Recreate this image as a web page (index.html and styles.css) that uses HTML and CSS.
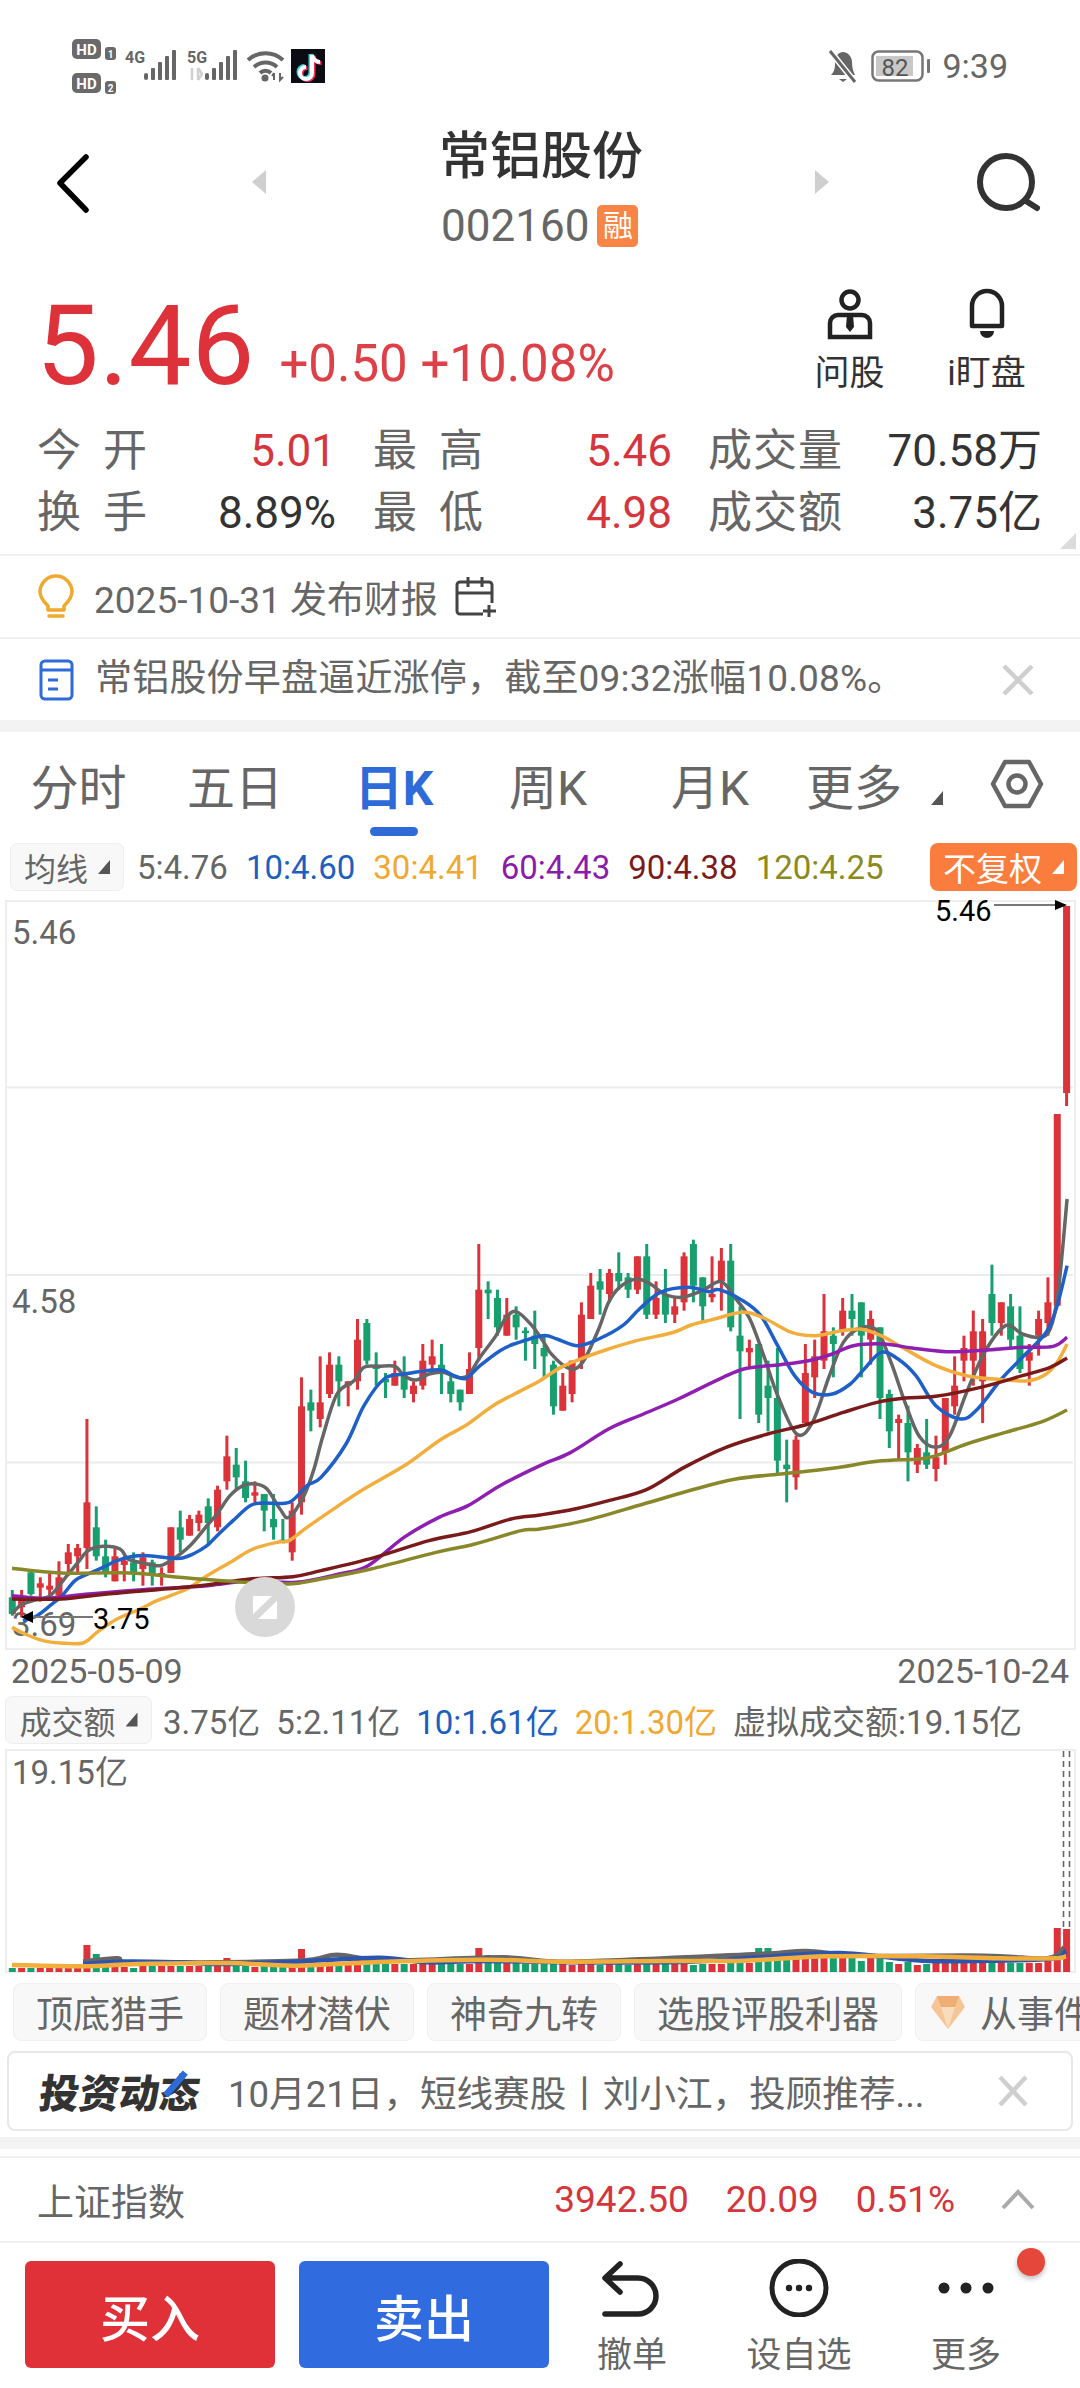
FILE: index.html
```html
<!DOCTYPE html>
<html lang="zh-CN">
<head>
  <meta charset="UTF-8" />
  <title>常铝股份</title>
  <link rel="stylesheet" href="styles.css">
</head>
<body>
  <div class="page">

    <div class="statusBar">
      <svg class="statusLeft" width="260" height="60" viewBox="70 36 260 60">
        <rect x="72" y="39" width="29" height="20" rx="5" fill="#6a6a6a"/>
        <text class="sbHd" x="86.5" y="55">HD</text>
        <rect x="105" y="47" width="11" height="13" rx="3" fill="#6a6a6a"/>
        <text class="sbNum" x="110.5" y="57.5">1</text>
        <rect x="72" y="73" width="29" height="20" rx="5" fill="#6a6a6a"/>
        <text class="sbHd" x="86.5" y="89">HD</text>
        <rect x="105" y="81" width="11" height="13" rx="3" fill="#6a6a6a"/>
        <text class="sbNum" x="110.5" y="91.5">2</text>
        <text class="sbNet" x="135" y="63">4G</text>
        <g fill="#666">
          <rect x="144" y="73" width="4" height="7" rx="2"/>
          <rect x="151" y="68" width="4" height="12" rx="1"/>
          <rect x="158" y="62" width="4" height="18" rx="1"/>
          <rect x="165" y="56" width="4" height="24" rx="1"/>
          <rect x="172" y="50" width="4" height="30" rx="1"/>
        </g>
        <text class="sbNet" x="197" y="63">5G</text>
        <path d="M192 68 v12 M198 68 v12 M198 68 l4 6 l-4 6" stroke="#d0d0d0" stroke-width="2.5" fill="none"/>
        <g fill="#666">
          <rect x="205" y="73" width="4" height="7" rx="2"/>
          <rect x="212" y="68" width="4" height="12" rx="1"/>
          <rect x="219" y="62" width="4" height="18" rx="1"/>
          <rect x="226" y="56" width="4" height="24" rx="1"/>
          <rect x="233" y="50" width="4" height="30" rx="1"/>
        </g>
        <g fill="none" stroke="#666" stroke-width="4">
          <path d="M248 60 a26 26 0 0 1 35 0"/>
          <path d="M254 67 a17 17 0 0 1 23 0"/>
          <path d="M260 73 a8 8 0 0 1 11 0"/>
        </g>
        <circle cx="265" cy="78" r="3.5" fill="#666"/>
        <path d="M274 80 v-7 M274 73 l-2 3 M280 73 v7 l3 -3" stroke="#666" stroke-width="2" fill="none"/>
        <rect x="291" y="49" width="34" height="34" fill="#0c0c14"/>
        <g fill="none" stroke-width="4">
          <path d="M312 55 v18 a6 6 0 1 1 -6 -6 M312 55 c1 4 4 7 8 7" stroke="#2fd8e0" transform="translate(-1.5,-1)"/>
          <path d="M312 55 v18 a6 6 0 1 1 -6 -6 M312 55 c1 4 4 7 8 7" stroke="#f0315a" transform="translate(1.5,1)"/>
          <path d="M312 55 v18 a6 6 0 1 1 -6 -6 M312 55 c1 4 4 7 8 7" stroke="#fff"/>
        </g>
      </svg>
      <div class="statusRight">
        <svg width="30" height="36" viewBox="832 47 30 36">
          <path d="M836 74 c4 -4 4 -8 4 -13 c0 -6 4 -10 8 -10 s9 4 9 10 c0 5 1 9 3 13 Z" fill="#666"/>
          <path d="M844 78 h8 l-4 3 Z" fill="#666"/>
          <path d="M835 50 L860 81" stroke="#fff" stroke-width="6"/>
          <path d="M835 50 L860 81" stroke="#666" stroke-width="3"/>
        </svg>
        <svg class="battery" width="60" height="32" viewBox="874 49 60 32">
          <rect x="875.5" y="50.5" width="50" height="29" rx="6" fill="none" stroke="#777" stroke-width="2.5"/>
          <rect x="879" y="55" width="37" height="20" fill="#c8c8c8"/>
          <rect x="930" y="58" width="3" height="14" rx="1" fill="#777"/>
          <text class="sbBattery" x="898" y="75">82</text>
        </svg>
        <span class="statusTime">9:39</span>
      </div>
    </div>

    <div class="head">
      <div class="headSide headLeft">
        <svg width="40" height="70" viewBox="50 148 40 70"><path d="M86 157 L60 183 L86 210" fill="none" stroke="#000" stroke-width="5.5" stroke-linecap="round" stroke-linejoin="round"/></svg>
        <i class="arrowPrev"></i>
      </div>
      <div class="headMid">
        <div class="stockName">常铝股份</div>
        <div class="stockCode">002160<span class="rongTag">融</span></div>
      </div>
      <div class="headSide headRight">
        <i class="arrowNext"></i>
        <svg width="70" height="70" viewBox="972 148 70 70"><circle cx="1006" cy="182" r="26" fill="none" stroke="#333" stroke-width="6"/><path d="M1026 201 L1037 208" stroke="#333" stroke-width="6" stroke-linecap="round"/></svg>
      </div>
    </div>

    <div class="quote">
      <div class="priceBox">
        <span class="bigPrice">5.46</span>
        <span class="priceDelta">+0.50 +10.08%</span>
      </div>
      <div class="quoteBtn">
        <svg width="60" height="52" viewBox="820 288 60 52">
          <circle cx="850" cy="300" r="8.5" fill="none" stroke="#222" stroke-width="4.5"/>
          <path d="M830 337 V323 a8 8 0 0 1 8 -8 H862 a8 8 0 0 1 8 8 V337 Z" fill="none" stroke="#222" stroke-width="4.5"/>
          <path d="M847 315 h6 l1 12 l-4 5 l-4 -5 Z" fill="#222"/>
        </svg>
        <span>问股</span>
      </div>
      <div class="quoteBtn">
        <svg width="60" height="52" viewBox="957 288 60 52">
          <path d="M972 326 V306 a15 15 0 0 1 30 0 V326 Z" fill="none" stroke="#222" stroke-width="4.5" stroke-linejoin="round"/>
          <path d="M980 331 h14 a7 7 0 0 1 -14 0 Z" fill="#222"/>
        </svg>
        <span>i盯盘</span>
      </div>
    </div>

    <div class="stats">
      <span class="statLabel">今 开</span><span class="statVal up">5.01</span>
      <span class="statLabel">最 高</span><span class="statVal up">5.46</span>
      <span class="statLabel">成交量</span><span class="statVal">70.58万</span>
      <span class="statLabel">换 手</span><span class="statVal">8.89%</span>
      <span class="statLabel">最 低</span><span class="statVal up">4.98</span>
      <span class="statLabel">成交额</span><span class="statVal">3.75亿</span>
      <i class="statsMore"></i>
    </div>

    <div class="tipRow tipLine">
      <svg width="40" height="46" viewBox="36 575 40 46">
        <path d="M48 607 C43 602 40 598 40 593 a16 16 0 0 1 32 0 c0 5 -3 9 -8 14 v4 H48 Z" fill="none" stroke="#f0a92c" stroke-width="3.5" stroke-linejoin="round"/>
        <path d="M49 617 H63" stroke="#f0a92c" stroke-width="3.5" stroke-linecap="round"/>
      </svg>
      <span class="tipText">2025-10-31 发布财报</span>
      <svg class="calIcon" width="42" height="42" viewBox="454 577 42 42">
        <path d="M482 615 H459 a3 3 0 0 1 -3 -3 V586 a3 3 0 0 1 3 -3 H488 a3 3 0 0 1 3 3 V604 M456 594 H491 M467 578 V588 M481 578 V588 M488 606 V618 M482 612 H495" fill="none" stroke="#444" stroke-width="3"/>
      </svg>
    </div>

    <div class="tipRow">
      <svg width="40" height="46" viewBox="36 657 40 46">
        <rect x="41" y="661" width="31" height="38" rx="4" fill="none" stroke="#2f6bd8" stroke-width="3"/>
        <path d="M41 670 H72 M48 680 H58 M48 689 H58" stroke="#2f6bd8" stroke-width="3" fill="none"/>
      </svg>
      <span class="tipText newsText">常铝股份早盘逼近涨停，截至09:32涨幅10.08%。</span>
      <svg class="closeIcon" width="34" height="34" viewBox="0 0 34 34"><path d="M3 3 L31 31 M31 3 L3 31" stroke="#cfcfcf" stroke-width="4.5"/></svg>
    </div>

    <div class="band"></div>

    <div class="tabs">
      <span class="tab">分时</span>
      <span class="tab">五日</span>
      <span class="tab tabOn">日K</span>
      <span class="tab">周K</span>
      <span class="tab">月K</span>
      <span class="tab tabMore">更多<i class="tri triGray"></i></span>
      <svg width="56" height="52" viewBox="989 761 56 52">
        <path d="M1005 765 H1029 L1041 787 L1029 809 H1005 L993 787 Z" fill="none" stroke="#666" stroke-width="4.5" stroke-linejoin="round"/>
        <circle cx="1017" cy="787" r="8.5" fill="none" stroke="#666" stroke-width="4.5"/>
      </svg>
    </div>

    <div class="legend">
      <span class="pickBtn">均线<i class="tri triGray"></i></span>
      <span class="maGray">5:4.76</span>
      <span class="maBlue">10:4.60</span>
      <span class="maOrange">30:4.41</span>
      <span class="maPurple">60:4.43</span>
      <span class="maBrown">90:4.38</span>
      <span class="maOlive">120:4.25</span>
      <span class="fuquanBtn">不复权<i class="tri triWhite"></i></span>
    </div>

    <svg class="klineChart" width="1080" height="752" viewBox="0 901 1080 752">
      <rect class="chartFrame" x="6" y="902" width="1069" height="748"/>
      <path class="gridLine" d="M7 1088.5 H1073 M7 1276 H1073 M7 1463.5 H1073"/>
      <text class="axisLabel" x="12" y="945">5.46</text>
      <text class="axisLabel" x="12" y="1314">4.58</text>
      <text class="axisLabel" x="12" y="1637">3.69</text>
      <g id="candles"></g>
      <g id="maLines"></g>
      <text class="markLabel" x="935" y="922">5.46</text>
      <path d="M994 906 H1056" stroke="#777" stroke-width="2"/>
      <path d="M1055 901 L1067 906 L1055 911 Z" fill="#000"/>
      <text class="markLabel" x="93" y="1630">3.75</text>
      <path d="M33 1618 H93" stroke="#777" stroke-width="2"/>
      <path d="M33 1612 L21 1618 L33 1624 Z" fill="#000"/>
      <circle cx="265" cy="1608" r="30" fill="#d9d9d9"/>
      <rect x="253" y="1597" width="24" height="23" rx="1" fill="#fff"/>
      <path d="M279 1595 L251 1622" stroke="#d9d9d9" stroke-width="7"/>
    </svg>

    <div class="dates"><span>2025-05-09</span><span>2025-10-24</span></div>

    <div class="legend legendVol">
      <span class="pickBtn pickWide">成交额<i class="tri triGray"></i></span>
      <span class="maGray">3.75亿</span>
      <span class="maGray">5:2.11亿</span>
      <span class="maBlue">10:1.61亿</span>
      <span class="maOrange">20:1.30亿</span>
      <span class="maGray">虚拟成交额:19.15亿</span>
    </div>

    <svg class="volChart" width="1080" height="225" viewBox="0 1750 1080 225">
      <rect class="chartFrame" x="6" y="1751" width="1069" height="222"/>
      <text class="axisLabel" x="12" y="1785">19.15亿</text>
      <g id="volBars"></g>
      <g id="volLines"></g>
      <path d="M1063.5 1752 V1930 M1069.5 1752 V1930" stroke="#666" stroke-width="1.6" stroke-dasharray="6 4" fill="none"/>
    </svg>

    <div class="chips">
      <span class="chip">顶底猎手</span>
      <span class="chip">题材潜伏</span>
      <span class="chip">神奇九转</span>
      <span class="chip">选股评股利器</span>
      <span class="chip chipLast">
        <svg width="36" height="36" viewBox="0 0 36 36">
          <path d="M7 2 H29 L35 13 L18 35 L1 13 Z" fill="#f5c596"/>
          <path d="M7 2 H29 L25 13 H11 Z" fill="#eeae74"/>
          <path d="M11 13 H25 L18 35 Z" fill="#f9dcbc"/>
        </svg>从事件</span>
    </div>

    <div class="promo">
      <span class="promoLogo">投资动态</span>
      <span class="promoText">10月21日，短线赛股丨刘小江，投顾推荐...</span>
      <svg class="closeIcon" width="34" height="34" viewBox="0 0 34 34"><path d="M4 3 L30 31 M30 3 L4 31" stroke="#cfcfcf" stroke-width="4.5"/></svg>
    </div>

    <div class="band bandLow"></div>

    <div class="indexRow">
      <span class="indexName">上证指数</span>
      <span class="indexVals up"><span>3942.50</span><span>20.09</span><span>0.51%</span></span>
      <svg width="36" height="22" viewBox="0 0 36 22"><path d="M3 19 L18 3 L33 19" fill="none" stroke="#aaa" stroke-width="4"/></svg>
    </div>

    <div class="bottomBar">
      <button class="tradeBtn buyBtn">买入</button>
      <button class="tradeBtn sellBtn">卖出</button>
      <div class="barItem">
        <svg width="62" height="58" viewBox="603 2260 62 58">
          <path d="M622 2265 L607 2279 L622 2293 M609 2279 H640 a18 18 0 0 1 0 36 H607" fill="none" stroke="#222" stroke-width="5.5" stroke-linecap="round" stroke-linejoin="round"/>
        </svg>
        <span>撤单</span>
      </div>
      <div class="barItem">
        <svg width="62" height="58" viewBox="768 2259 62 58">
          <circle cx="799" cy="2288" r="27" fill="none" stroke="#222" stroke-width="5"/>
          <circle cx="789" cy="2288" r="3.2" fill="#222"/><circle cx="799" cy="2288" r="3.2" fill="#222"/><circle cx="809" cy="2288" r="3.2" fill="#222"/>
        </svg>
        <span>设自选</span>
      </div>
      <div class="barItem">
        <svg width="62" height="58" viewBox="935 2259 62 58">
          <circle cx="944" cy="2288" r="5.5" fill="#222"/><circle cx="966" cy="2288" r="5.5" fill="#222"/><circle cx="988" cy="2288" r="5.5" fill="#222"/>
        </svg>
        <span>更多</span>
      </div>
      <i class="redDot"></i>
    </div>

  </div>
  <script src="chart.js"></script>
</body>
</html>
```

FILE: styles.css
```css
html, body {
  margin: 0;
  padding: 0;
  background: #fff;
  color: #666;
  font-family: Roboto, "Noto Sans CJK SC", sans-serif;
}

.page {
  width: 1080px;
  height: 2388px;
  overflow: hidden;
}

svg { display: block; flex: none; }

.up { color: #d5353c; }

/* status bar */
.statusBar {
  height: 120px;
  padding: 36px 72px 0 70px;
  box-sizing: border-box;
  display: flex;
  justify-content: space-between;
}

.statusRight {
  display: flex;
  align-items: center;
  gap: 14px;
  height: 60px;
  margin-right: 0;
}

.statusTime { font-size: 34px; color: #666; margin-left: -3px; }

.sbHd { font: bold 15px Roboto, sans-serif; fill: #fff; text-anchor: middle; }
.sbNum { font: bold 10px Roboto, sans-serif; fill: #fff; text-anchor: middle; }
.sbNet { font: bold 16px Roboto, sans-serif; fill: #666; text-anchor: middle; }
.sbBattery { font: 24px Roboto, sans-serif; fill: #555; text-anchor: middle; }

/* header */
.head {
  height: 142px;
  display: grid;
  grid-template-columns: 441px 199px 440px;
}

.headSide {
  display: flex;
  justify-content: space-between;
  height: 126px;
  align-items: center;
}

.headLeft { padding: 0 175px 0 50px; }
.headRight { padding: 0 38px 0 175px; }

.arrowPrev, .arrowNext {
  width: 14px;
  height: 24px;
  background: #cfcfcf;
  margin-top: -2px;
}
.arrowPrev { clip-path: polygon(100% 0, 100% 100%, 0 50%); }
.arrowNext { clip-path: polygon(0 0, 100% 50%, 0 100%); }

.stockName {
  height: 72px;
  line-height: 74px;
  margin-left: -2px;
  font-size: 51px;
  font-weight: 500;
  color: #333;
  white-space: nowrap;
}

.stockCode {
  display: flex;
  align-items: center;
  height: 68px;
  font-size: 44px;
  white-space: nowrap;
}

.rongTag {
  width: 41px;
  height: 42px;
  margin-left: 8px;
  background: #f88546;
  border-radius: 5px;
  color: #fff;
  font-size: 30px;
  line-height: 42px;
  text-align: center;
}

/* price */
.quote {
  height: 157px;
  display: flex;
  padding-right: 25px;
}

.priceBox {
  flex: 1;
  display: flex;
  align-items: baseline;
  padding: 0 0 0 36px;
  height: 136px;
}

.bigPrice {
  font-size: 112px;
  line-height: 168px;
  color: #dd3239;
}

.priceDelta {
  font-size: 51px;
  margin-left: 25px;
  color: #dd4047;
  white-space: nowrap;
  transform: translateY(-3px);
}

.quoteBtn {
  width: 137px;
  padding-top: 26px;
  display: flex;
  flex-direction: column;
  align-items: center;
  font-size: 35px;
  color: #333;
}

.quoteBtn span {
  margin-top: 10px;
  line-height: 48px;
  white-space: nowrap;
}

/* stats */
.stats {
  position: relative;
  height: 137px;
  padding: 1px 0 0 37px;
  box-sizing: border-box;
  display: grid;
  grid-template-columns: 110px 189px 147px 189px 170px 200px;
  grid-auto-rows: 62px;
  border-bottom: 2px solid #f0f0f0;
  font-size: 44px;
}

.stats .statLabel:nth-child(6n+3) { margin-left: 37px; }
.stats .statLabel:nth-child(6n+5) { margin-left: 36px; }

.statLabel {
  line-height: 62px;
  color: #666;
  font-size: 44px;
  text-align-last: justify;
  white-space: nowrap;
}

.statVal {
  line-height: 62px;
  text-align: right;
  color: #333;
  white-space: nowrap;
}
.statVal.up { color: #d5353c; }

.statsMore {
  position: absolute;
  right: 4px;
  bottom: 5px;
  width: 16px;
  height: 16px;
  background: #dcdcdc;
  clip-path: polygon(100% 0, 100% 100%, 0 100%);
}

/* tips */
.tipRow {
  height: 81px;
  padding-left: 36px;
  display: flex;
  align-items: center;
  box-sizing: border-box;
}

.tipLine {
  height: 83px;
  border-bottom: 2px solid #f0f0f0;
}

.tipText {
  margin-left: 18px;
  font-size: 37px;
  white-space: nowrap;
}

.newsText { margin-left: 19px; letter-spacing: 0.2px; line-height: 50px; margin-top: -2px; }
.calIcon { margin-left: 17px; }
.closeIcon { margin-left: auto; margin-right: 45px; }

.band { height: 12px; background: #f3f3f3; }

/* period tabs */
.tabs {
  height: 104px;
  margin-bottom: 7px;
  display: grid;
  grid-template-columns: 157px 156px 162px 146px 178px 190px 56px;
  align-items: center;
  font-size: 48px;
  color: #666;
}

.tab { position: relative; text-align: center; }

.tabOn { color: #2f6bd8; font-weight: 700; }

.tabOn::after {
  content: "";
  position: absolute;
  left: 50%;
  bottom: -17px;
  width: 48px;
  height: 9px;
  margin-left: -24px;
  background: #2f6bd8;
  border-radius: 5px;
}

.tabMore { text-align: left; padding-left: 7px; white-space: nowrap; }

.tri {
  display: inline-block;
  width: 12px;
  height: 14px;
  clip-path: polygon(100% 0, 100% 100%, 0 100%);
}
.triGray { background: #555; }
.triWhite { background: #fff; }
.tabMore .tri { margin-left: 29px; }

/* legend rows */
.legend {
  height: 48px;
  padding-left: 10px;
  display: flex;
  align-items: center;
  gap: 18px;
  font-size: 33px;
  white-space: nowrap;
}

.pickBtn {
  width: 114px;
  height: 48px;
  margin-right: -5px;
  box-sizing: border-box;
  display: flex;
  align-items: center;
  justify-content: center;
  gap: 10px;
  background: #f8f8f8;
  border: 1px solid #eee;
  border-radius: 7px;
  font-size: 32px;
}

.pickWide { width: 147px; }

.fuquanBtn {
  margin-left: auto;
  margin-right: 3px;
  width: 147px;
  height: 48px;
  display: flex;
  align-items: center;
  justify-content: center;
  gap: 10px;
  background: #fb7d3e;
  border-radius: 8px;
  color: #fff;
}

.maGray { color: #666; }
.maBlue { color: #1c5fbe; }
.maOrange { color: #f0a830; }
.maPurple { color: #8b1caa; }
.maBrown { color: #7b1c1c; }
.maOlive { color: #8a8a20; }

.legendVol {
  height: 47px;
  margin-top: 6px;
  padding-left: 5px;
  gap: 16px;
}

/* charts */
.klineChart { margin-top: 9px; overflow: visible; }
.volChart { margin-top: 6px; }

.chartFrame { fill: #fff; stroke: #eee; stroke-width: 2; }
.gridLine { fill: none; stroke: #ebebeb; stroke-width: 2; }

.axisLabel {
  font: 33px Roboto, "Noto Sans CJK SC", sans-serif;
  fill: #666;
}

.markLabel {
  font: 29px Roboto, sans-serif;
  fill: #000;
}

.dates {
  height: 38px;
  padding: 0 11px 0 11px;
  display: flex;
  justify-content: space-between;
  align-items: center;
  font-size: 34px;
}

/* feature chips */
.chips {
  height: 58px;
  margin-top: 9px;
  padding-left: 13px;
  display: flex;
  gap: 13px;
  overflow: hidden;
}

.chip {
  flex: none;
  padding: 0 22px;
  display: flex;
  align-items: center;
  background: #f8f8f8;
  border: 1px solid #efefef;
  border-radius: 8px;
  font-size: 37px;
  white-space: nowrap;
  box-sizing: border-box;
}

.chipLast { padding-left: 14px; }
.chipLast svg { margin-right: 14px; }

/* promo card */
.promo {
  position: relative;
  height: 80px;
  margin: 10px 7px 0;
  padding-left: 31px;
  box-sizing: border-box;
  display: flex;
  align-items: center;
  border: 2px solid #e8e8e8;
  border-radius: 8px;
}

.promoLogo {
  position: relative;
  font-size: 40px;
  font-weight: 900;
  color: #333;
  white-space: nowrap;
  transform: skewX(-8deg);
}

.promoLogo::after {
  content: "";
  position: absolute;
  left: 131px;
  top: 8px;
  width: 7px;
  height: 28px;
  background: #2f6bd8;
  transform: rotate(36deg);
}

.promoText {
  margin-left: 28px;
  font-size: 36.6px;
  white-space: nowrap;
}

.promo .closeIcon { margin-right: 41px; }

.bandLow { margin-top: 6px; }

/* index row */
.indexRow {
  height: 87px;
  margin-top: 7px;
  padding: 0 44px 0 37px;
  box-sizing: border-box;
  display: flex;
  align-items: center;
  border-top: 2px solid #f0f0f0;
  border-bottom: 2px solid #f0f0f0;
  font-size: 37px;
}

.indexName { flex: 1; }

.indexVals {
  display: flex;
  gap: 37px;
  margin-right: 45px;
}

/* bottom bar */
.bottomBar {
  position: relative;
  padding: 18px 0 0 25px;
  display: flex;
  gap: 24px;
}

.tradeBtn {
  width: 250px;
  height: 107px;
  border: none;
  border-radius: 6px;
  color: #fff;
  font: 500 50px Roboto, "Noto Sans CJK SC", sans-serif;
}

.buyBtn { background: #e03038; }
.sellBtn { background: #306bdf; }

.barItem {
  position: absolute;
  top: 16px;
  display: flex;
  flex-direction: column;
  align-items: center;
  font-size: 35px;
  white-space: nowrap;
}

.barItem span { line-height: 50px; margin-top: 14px; }

.barItem:nth-of-type(1) { left: 582px; width: 100px; }
.barItem:nth-of-type(2) { left: 749px; width: 100px; }
.barItem:nth-of-type(3) { left: 916px; width: 100px; }

.redDot {
  position: absolute;
  left: 1017px;
  top: 5px;
  width: 28px;
  height: 28px;
  border-radius: 50%;
  background: #e5483a;
  box-shadow: 0 3px 5px rgba(0, 0, 0, 0.25);
}
```

FILE: chart.js
```js
// chart y values are in thirds of a pixel, measured from y=1150
const SVG_NS = "http://www.w3.org/2000/svg";
const RED = "#dc3239";
const GREEN = "#17a06d";

const slotX = i => 12.3 + i * 9.33;
const toY = v => 1150 + v / 3;
// right half of the line points runs a bit wide, pull it in
const lineX = x => (x > 540 ? 540 + (x - 540) * 0.9945 : x);

// [R or G, high, body top, body bottom, low]
const candles = [
  "G 1323 1345 1395 1400", "R 1323 1350 1375 1405", "G 1268 1270 1335 1340", "R 1285 1303 1316 1358",
  "R 1275 1310 1322 1350", "R 1237 1285 1340 1350", "R 1185 1210 1245 1280", "R 1185 1197 1222 1270",
  "R 810 1060 1197 1260", "G 1072 1135 1222 1235", "G 1172 1222 1270 1285", "R 1200 1222 1297 1297",
  "R 1222 1235 1248 1297", "G 1210 1240 1272 1297", "R 1210 1225 1260 1310", "G 1232 1240 1280 1310",
  "R 1255 1272 1280 1310", "R 1135 1135 1272 1272", "G 1085 1135 1172 1210", "R 1098 1110 1160 1160",
  "R 1085 1097 1122 1147", "G 1048 1072 1122 1185", "R 1010 1022 1135 1147", "R 860 922 997 1022",
  "G 897 947 985 1022", "G 935 997 1047 1060", "R 997 1030 1040 1060", "G 1035 1035 1085 1147",
  "G 1035 1110 1135 1172", "G 1110 1172 1180 1180", "R 1060 1085 1210 1235", "R 685 772 1060 1097",
  "G 722 760 785 847", "R 622 760 810 835", "R 610 647 735 747", "G 622 647 697 772",
  "R 697 697 710 772", "R 510 572 697 722", "G 510 522 635 647", "G 610 647 660 710",
  "G 672 690 700 747", "R 635 672 710 710", "G 622 672 722 747", "R 697 710 735 760",
  "R 585 635 710 722", "R 572 622 647 672", "G 585 647 672 735", "G 672 697 735 760",
  "G 722 722 760 785", "R 610 660 735 735", "R 285 422 597 635", "G 397 422 433 510",
  "G 422 447 535 560", "R 447 497 560 560", "G 472 497 535 572", "G 535 545 552 635",
  "G 485 560 585 660", "G 560 597 622 685", "G 635 647 772 797", "R 672 710 785 785",
  "R 635 635 735 760", "R 460 497 635 660", "R 372 410 510 510", "G 360 397 422 497",
  "R 360 372 435 460", "G 310 372 397 422", "G 372 385 422 447", "R 322 322 422 435",
  "G 285 322 497 510", "R 397 447 497 510", "G 360 435 497 522", "R 447 472 497 522",
  "R 310 322 460 485", "G 272 285 410 460", "G 385 385 472 522", "R 322 435 445 460",
  "R 297 335 397 485", "G 285 335 535 547", "G 472 560 607 810", "R 572 597 610 660",
  "G 585 585 797 822", "G 635 710 747 847", "G 597 747 935 972", "G 872 947 960 1060",
  "R 860 872 985 1022", "R 585 672 822 822", "R 572 622 685 747", "R 435 547 635 660",
  "G 535 560 585 685", "R 447 485 547 560", "G 435 485 510 560", "G 460 460 560 685",
  "R 485 510 572 647", "G 535 535 747 810", "G 722 735 847 897", "R 797 810 822 935",
  "G 770 822 910 997", "R 885 897 947 972", "G 810 910 947 960", "R 860 925 960 997",
  "R 747 747 910 947", "R 622 710 772 797", "R 560 597 635 697", "R 485 547 635 710",
  "R 510 547 697 822", "G 347 435 522 560", "R 460 460 522 560", "G 435 472 572 597",
  "G 472 560 660 672", "R 585 610 635 710", "R 485 510 560 620", "R 385 460 522 560",
  "R -105 -105 470 470", "R -729 -729 -168 -129"
].map(s => s.split(" "));

const volumes = [
  4, 4, 4, 4, 4, 4, 4, 4, 27, 18, 7, 6, 5, 4, 6, 6, 6, 6, 6, 6,
  6, 6, 6, 14, 7, 7, 5, 7, 6, 6, 8, 23, 8, 8, 12, 9, 8, 16, 9, 9,
  9, 8, 8, 8, 8, 8, 8, 8, 8, 8, 24, 17, 10, 10, 10, 8, 8, 8, 8, 8,
  7, 8, 8, 7, 8, 8, 7, 8, 8, 8, 8, 8, 8, 7, 8, 8, 8, 9, 9, 9,
  24, 24, 13, 12, 13, 13, 14, 16, 15, 14, 14, 11, 14, 14, 10, 8,
  10, 7, 8, 9, 9, 9, 10, 10, 10, 11, 11, 9, 9, 9, 9, 11, 44, 43
];

const maLines = [
  { color: "#666666", pts: [[12,1395],[20,1370],[33,1355],[50,1340],[67,1280],[78,1240],[88,1205],[103,1192],[120,1200],[128,1230],[143,1242],[160,1250],[173,1230],[190,1190],[207,1130],[217,1095],[230,1040],[243,1010],[255,1005],[267,1020],[280,1080],[289,1105],[304,1040],[314,960],[323,860],[337,735],[354,695],[364,655],[379,652],[395,652],[404,680],[416,693],[429,675],[443,670],[457,685],[468,680],[480,625],[496,560],[505,510],[516,487],[532,530],[546,590],[550,610],[564,650],[575,660],[585,630],[599,540],[609,460],[620,415],[637,390],[651,405],[665,435],[682,445],[703,425],[722,398],[737,450],[751,510],[765,620],[779,740],[798,855],[814,820],[831,680],[845,580],[862,537],[879,545],[893,640],[907,760],[921,860],[938,895],[952,860],[969,730],[987,610],[1008,530],[1025,555],[1042,565],[1053,540],[1061,430],[1070,150]] },
  { color: "#1f5fc8", pts: [[23,1415],[37,1400],[50,1370],[62,1340],[75,1295],[88,1275],[103,1255],[117,1235],[133,1222],[148,1220],[163,1225],[180,1228],[193,1215],[207,1190],[217,1160],[233,1115],[250,1070],[263,1062],[289,1060],[307,1010],[321,985],[346,885],[364,770],[384,690],[404,675],[439,662],[454,680],[466,688],[480,650],[500,605],[514,585],[543,560],[557,570],[578,590],[599,570],[623,530],[640,480],[661,430],[689,415],[710,428],[720,422],[744,455],[762,500],[779,590],[796,680],[814,730],[834,735],[852,705],[866,660],[883,610],[900,630],[918,680],[938,770],[963,810],[980,780],[1004,690],[1025,625],[1049,550],[1060,470],[1070,350]] },
  { color: "#f2ae3d", pts: [[12,1435],[25,1455],[43,1475],[60,1482],[83,1482],[97,1450],[117,1410],[140,1380],[157,1355],[187,1320],[207,1280],[233,1235],[253,1200],[277,1180],[289,1175],[307,1135],[336,1075],[364,1020],[407,945],[439,875],[468,825],[493,770],[521,725],[540,695],[561,655],[585,625],[609,600],[637,575],[672,552],[692,528],[713,512],[744,490],[765,507],[793,550],[817,560],[838,548],[862,540],[883,560],[907,600],[938,650],[969,680],[1004,692],[1032,695],[1049,675],[1060,640],[1070,585]] },
  { color: "#8e1fb0", pts: [[12,1340],[43,1348],[89,1335],[143,1322],[207,1310],[250,1295],[296,1300],[339,1275],[368,1250],[404,1165],[439,1105],[468,1070],[500,1010],[540,950],[571,910],[609,840],[644,795],[679,750],[724,685],[748,658],[782,647],[810,635],[834,615],[855,590],[886,585],[914,597],[949,608],[990,603],[1025,595],[1056,592],[1070,565]] },
  { color: "#7a1a1a", pts: [[12,1350],[61,1350],[107,1335],[200,1310],[250,1290],[293,1283],[321,1265],[375,1225],[429,1175],[471,1148],[511,1110],[540,1098],[575,1080],[609,1055],[647,1022],[685,955],[727,895],[769,855],[810,825],[845,790],[879,760],[907,747],[938,742],[983,715],[1025,680],[1053,655],[1070,627]] },
  { color: "#88882a", pts: [[12,1258],[61,1272],[129,1272],[179,1285],[236,1298],[289,1305],[321,1290],[371,1260],[436,1210],[475,1185],[521,1145],[540,1140],[585,1115],[644,1065],[696,1020],[737,990],[782,975],[834,958],[879,937],[921,930],[938,920],[969,885],[1008,850],[1045,818],[1070,783]] }
];

// volume averages: x in px, y in thirds of a pixel from y=1640
const volLines = [
  { color: "#666666", pts: [[83,968],[117,958],[138,970],[296,965],[337,947],[386,965],[503,955],[572,968],[758,945],[806,936],[861,950],[985,950],[1047,958],[1064,925]] },
  { color: "#2c55b0", pts: [[83,975],[124,968],[179,970],[227,975],[296,968],[379,956],[427,970],[482,966],[572,970],[689,968],[758,955],[840,942],[923,965],[999,965],[1054,958],[1066,935]] },
  { color: "#f2ae3d", pts: [[12,978],[83,982],[138,975],[227,972],[296,980],[386,968],[482,962],[565,968],[661,966],[744,965],[826,952],[923,952],[999,958],[1054,958],[1066,952]] }
];

function add(parent, tag, attrs) {
  const el = document.createElementNS(SVG_NS, tag);
  for (const k in attrs) el.setAttribute(k, attrs[k]);
  parent.appendChild(el);
}

// catmull-rom through the points
function smoothPath(pts) {
  let d = `M${pts[0][0]} ${pts[0][1]}`;
  for (let i = 0; i < pts.length - 1; i++) {
    const p0 = pts[Math.max(i - 1, 0)];
    const p1 = pts[i];
    const p2 = pts[i + 1];
    const p3 = pts[Math.min(i + 2, pts.length - 1)];
    const c1x = p1[0] + (p2[0] - p0[0]) / 6;
    const c1y = p1[1] + (p2[1] - p0[1]) / 6;
    const c2x = p2[0] - (p3[0] - p1[0]) / 6;
    const c2y = p2[1] - (p3[1] - p1[1]) / 6;
    d += ` C${c1x} ${c1y} ${c2x} ${c2y} ${p2[0]} ${p2[1]}`;
  }
  return d;
}

function drawLines(group, lines, baseY, width, mapX) {
  lines.forEach(line => {
    const pts = line.pts.map(p => [mapX(p[0]), baseY + p[1] / 3]);
    add(group, "path", { d: smoothPath(pts), fill: "none", stroke: line.color, "stroke-width": width });
  });
}

const candleGroup = document.getElementById("candles");
const volGroup = document.getElementById("volBars");

candles.forEach((c, i) => {
  const color = c[0] === "R" ? RED : GREEN;
  const x = slotX(i);
  const high = toY(+c[1]);
  const top = toY(+c[2]);
  const bottom = toY(+c[3]);
  const low = toY(+c[4]);
  add(candleGroup, "rect", { x: x - 1.5, y: high, width: 3, height: low - high, fill: color });
  add(candleGroup, "rect", { x: x - 3.5, y: top, width: 7, height: Math.max(bottom - top, 2), fill: color });
  add(volGroup, "rect", { x: x - 3.5, y: 1973 - volumes[i], width: 7, height: volumes[i], fill: color });
});

drawLines(document.getElementById("maLines"), maLines, 1150, 3.5, lineX);
drawLines(document.getElementById("volLines"), volLines, 1640, 4.5, x => x);
```
